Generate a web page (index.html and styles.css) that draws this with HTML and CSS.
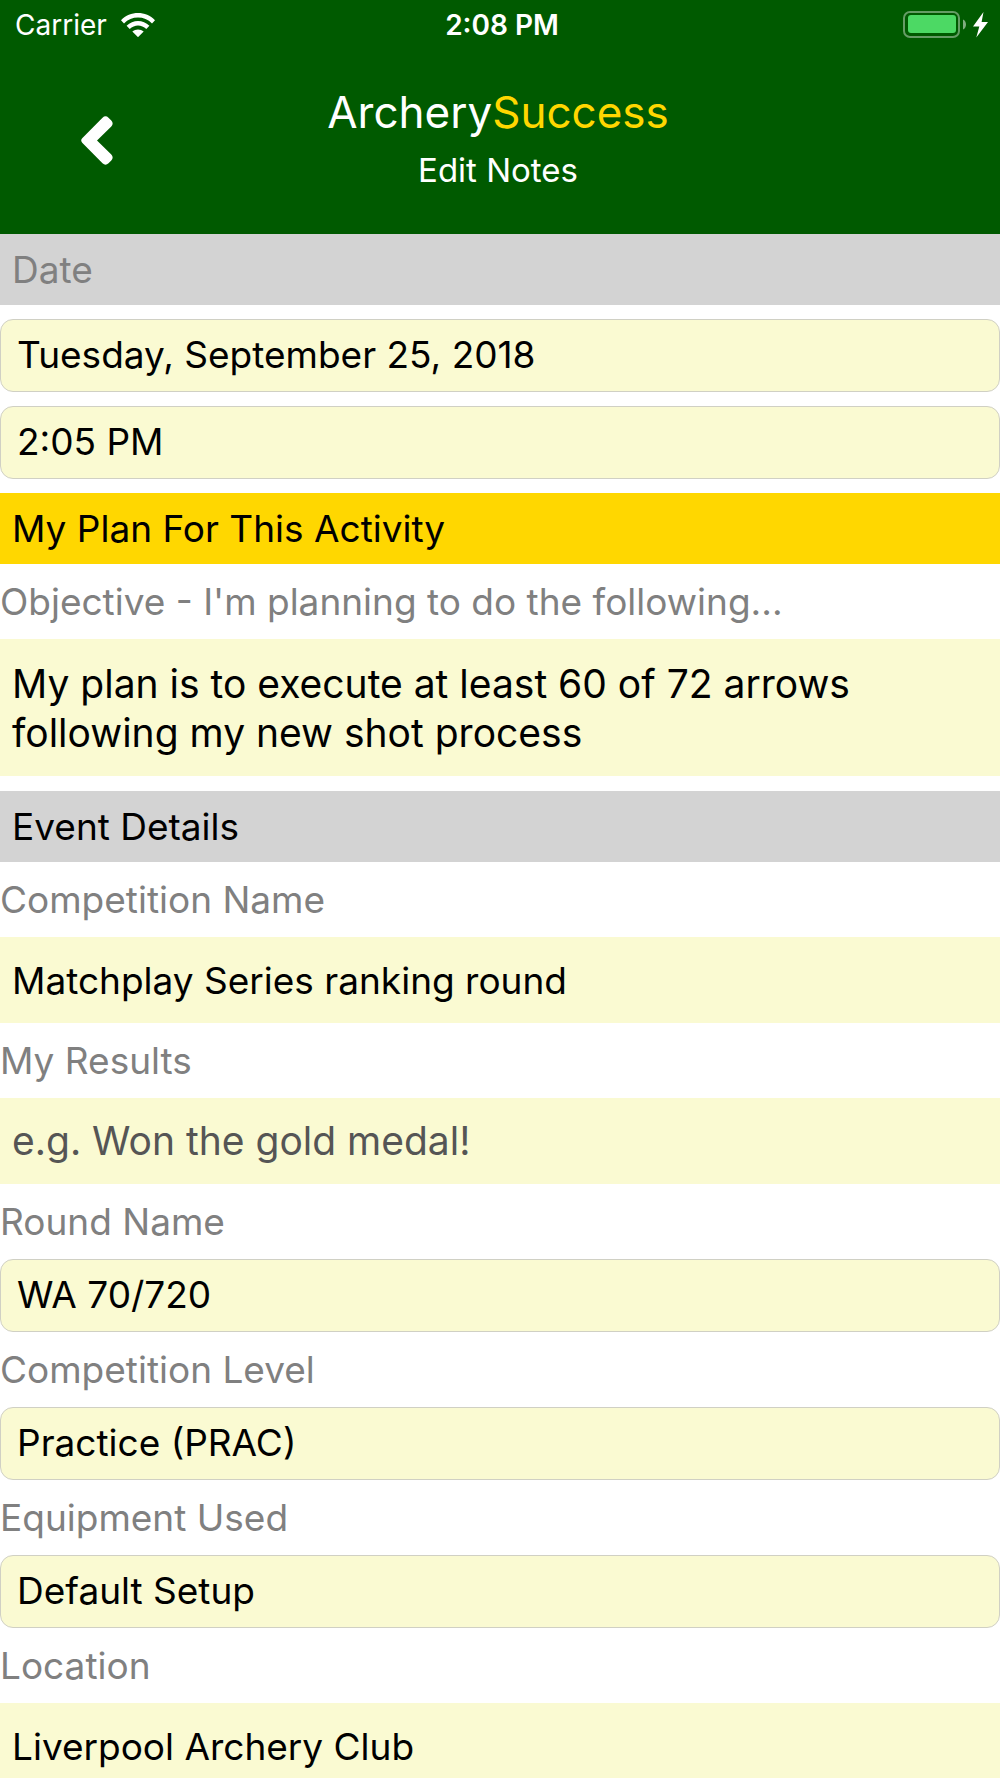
FILE: index.html
```html
<!DOCTYPE html>
<html lang="en">
<head>
<meta charset="utf-8">
<meta name="viewport" content="width=device-width, initial-scale=1">
<title>ArcherySuccess - Edit Notes</title>
<link rel="stylesheet" href="styles.css">
</head>
<body>
<div class="app">
  <header class="header">
    <div class="status">
      <div class="status-left">
        <span>Carrier</span>
        <svg class="wifi" viewBox="0 0 34 24" aria-hidden="true">
          <path d="M0 7.2C9-2.4 25-2.4 34 7.2L31 10.4C23.500 2.600 10.500 2.600 3 10.400Z"/>
          <path d="M5.600 12.800C12 6.400 22 6.400 28.400 12.800L25.300 16C20.500 11.300 13.500 11.300 8.700 16Z"/>
          <path d="M11.300 18.500C14.500 15.700 19.500 15.700 22.700 18.500L17 24.200Z"/>
        </svg>
      </div>
      <span class="status-time">2:08 PM</span>
      <div class="status-right">
        <svg class="battery" viewBox="0 0 86 28" aria-hidden="true">
          <rect x="1" y="1" width="55" height="25" rx="6" fill="none" stroke="#fff" stroke-opacity=".4" stroke-width="2"/>
          <rect x="5" y="4" width="48" height="18" rx="3" fill="#4cd964"/>
          <path d="M60 8.500C64 10 64 17 60 18.500Z" fill="#fff" fill-opacity=".5"/>
          <path d="M80.500 1L70 15.500H76.300L73.300 26.500L85 11H78.600Z" fill="#fff"/>
        </svg>
      </div>
    </div>
    <div class="nav">
      <button class="back" type="button" aria-label="Back">
        <svg class="chevron" viewBox="0 0 32 50" aria-hidden="true">
          <path d="M1.200 22.300L21.500 1.700Q24.500-1 27.500 1.700L30.300 4.500Q33 7.500 30.300 10.400L16 24.500L30.300 38.600Q33 41.500 30.300 44.500L27.500 47.300Q24.500 50 21.500 47.300L1.200 26.700Q-.8 24.500 1.200 22.300Z"/>
        </svg>
      </button>
      <div class="titles">
        <h1 class="brand">Archery<span class="brand-accent">Success</span></h1>
        <p class="subtitle">Edit Notes</p>
      </div>
    </div>
  </header>

  <form class="form">
    <label class="section section-muted" for="date">Date</label>
    <div class="pickers">
      <input class="field picker" id="date" type="text" value="Tuesday, September 25, 2018">
      <input class="field picker" type="text" aria-label="Time" value="2:05 PM">
    </div>

    <h2 class="section section-gold">My Plan For This Activity</h2>
    <label class="label" for="objective">Objective - I'm planning to do the following...</label>
    <textarea class="field entry notes" id="objective" rows="2">My plan is to execute at least 60 of 72 arrows following my new shot process</textarea>

    <h2 class="section">Event Details</h2>
    <label class="label" for="competition">Competition Name</label>
    <input class="field entry" id="competition" type="text" value="Matchplay Series ranking round">
    <label class="label" for="results">My Results</label>
    <input class="field entry" id="results" type="text" placeholder="e.g. Won the gold medal!">
    <label class="label" for="round">Round Name</label>
    <select class="field picker" id="round"><option>WA 70/720</option></select>
    <label class="label" for="level">Competition Level</label>
    <select class="field picker" id="level"><option>Practice (PRAC)</option></select>
    <label class="label" for="equipment">Equipment Used</label>
    <select class="field picker" id="equipment"><option>Default Setup</option></select>
    <label class="label" for="location">Location</label>
    <input class="field entry" id="location" type="text" value="Liverpool Archery Club">
  </form>
</div>
</body>
</html>
```
FILE: styles.css
```css
* {
  box-sizing: border-box;
}

body {
  margin: 0;
  font-family: Inter, "Liberation Sans", sans-serif;
  font-size: 37px;
  color: #000;
  background: #fff;
}

.app {
  display: flex;
  flex-direction: column;
  height: 100vh;
}

.header {
  flex: none;
  color: #fff;
  background: #005a00;
}

/* Status bar */
.status {
  display: grid;
  grid-template-columns: 1fr auto 1fr;
  align-items: center;
  height: 50px;
  padding: 0 11px 0 15px;
  font-size: 28px;
}

.status-left {
  display: flex;
  align-items: center;
  gap: 14px;
}

.status-right {
  display: flex;
  justify-content: flex-end;
}

.status-time {
  font-weight: 600;
}

.wifi {
  width: 34px;
  height: 24px;
  fill: #fff;
}

.battery {
  width: 86px;
  height: 28px;
}

/* Title bar */
.nav {
  display: grid;
  grid-template-columns: 194px 1fr 198px;
  height: 184px;
  padding-bottom: 2px;
}

.back {
  display: flex;
  align-items: center;
  justify-content: center;
  padding: 0;
  border: 0;
  background: none;
}

.chevron {
  width: 32px;
  height: 50px;
  fill: #fff;
}

.titles {
  display: flex;
  flex-direction: column;
  align-items: center;
  padding-top: 32px;
}

.brand {
  margin: 0;
  font-size: 44px;
  font-weight: 400;
  line-height: 60px;
}

.brand-accent {
  color: #ffd700;
}

.subtitle {
  margin: 0;
  font-size: 33px;
  line-height: 56px;
}

/* Form */
.form {
  display: flex;
  flex: 1;
  flex-direction: column;
  min-height: 0;
  overflow-y: auto;
  scrollbar-width: none;
}

.form > * {
  flex: none;
}

.section {
  margin: 0;
  padding: 0 12px;
  font-size: 37px;
  font-weight: 400;
  line-height: 71px;
  background: #d3d3d3;
}

.section-muted {
  color: #808080;
}

.section-gold {
  background: #ffd700;
}

.pickers {
  display: flex;
  flex-direction: column;
  gap: 14px;
  padding: 14px 0;
}

.label {
  line-height: 75px;
  color: #808080;
}

.field {
  display: block;
  width: 100%;
  margin: 0;
  border: 0;
  border-radius: 0;
  outline: 0;
  font-family: inherit;
  font-size: 37px;
  color: #000;
  background: #fafad2;
  appearance: none;
}

.picker {
  height: 73px;
  padding: 0 16px 2px;
  border: 1px solid #d0d0c4;
  border-radius: 13px;
}

.entry {
  height: 86px;
  padding: 0 12px;
}

.entry::placeholder {
  font-size: 39px;
  color: #555;
  opacity: 1;
}

.notes {
  height: 137px;
  margin-bottom: 15px;
  padding: 20px 12px;
  font-size: 39px;
  line-height: 49px;
  resize: none;
}
```
